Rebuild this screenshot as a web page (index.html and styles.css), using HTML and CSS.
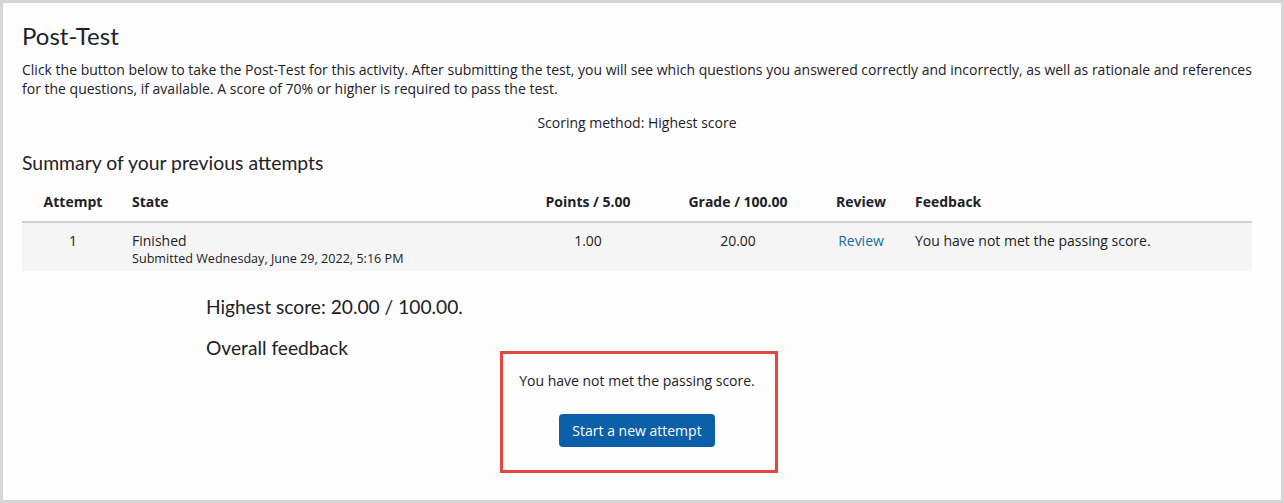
FILE: index.html
```html
<!DOCTYPE html>
<html lang="en">
<head>
  <meta charset="UTF-8">
  <title>Post-Test</title>
  <link rel="stylesheet" href="styles.css">
</head>
<body>
  <div class="frame">
    <h2 class="page-title">Post-Test</h2>
    <p class="intro">Click the button below to take the Post-Test for this activity. After submitting the test, you will see which questions you answered correctly and incorrectly, as well as rationale and references for the questions, if available. A score of 70% or higher is required to pass the test.</p>
    <p class="scoring">Scoring method: Highest score</p>

    <h3 class="section-title">Summary of your previous attempts</h3>
    <table class="attempts">
      <colgroup>
        <col class="c-attempt">
        <col class="c-state">
        <col class="c-points">
        <col class="c-grade">
        <col class="c-review">
        <col class="c-feedback">
      </colgroup>
      <thead>
        <tr>
          <th class="center">Attempt</th>
          <th>State</th>
          <th class="center">Points / 5.00</th>
          <th class="center">Grade / 100.00</th>
          <th class="center">Review</th>
          <th>Feedback</th>
        </tr>
      </thead>
      <tbody>
        <tr>
          <td class="center">1</td>
          <td>Finished<span class="submitted">Submitted Wednesday, June 29, 2022, 5:16 PM</span></td>
          <td class="center">1.00</td>
          <td class="center">20.00</td>
          <td class="center"><a href="#" class="review-link">Review</a></td>
          <td>You have not met the passing score.</td>
        </tr>
      </tbody>
    </table>

    <h3 class="result">Highest score: 20.00 / 100.00.</h3>
    <h3 class="result overall">Overall feedback</h3>

    <div class="feedback-wrap">
      <div class="feedback-box">
        <p class="feedback-text">You have not met the passing score.</p>
        <button class="btn-attempt">Start a new attempt</button>
        <span class="highlight"></span>
      </div>
    </div>
  </div>
</body>
</html>
```

FILE: styles.css
```css
* {
  box-sizing: border-box;
}

body {
  margin: 0;
  font-family: 'Open Sans', sans-serif;
  font-size: 14px;
  color: #1d2125;
  background: #fff;
}

.frame {
  height: 503px;
  border: 3px solid #d6d6d6;
  background: #fdfdfd;
  padding: 18px 29px 0 19px;
}

.page-title,
.section-title,
.result {
  font-family: Lato, 'Open Sans', sans-serif;
  font-weight: 400;
}

.page-title {
  margin: 0;
  font-size: 24px;
  line-height: 29px;
}

.intro {
  margin: 10px 0 0;
  line-height: 19px;
}

.scoring {
  margin: 15px 0 0;
  line-height: 20px;
  text-align: center;
}

.section-title {
  margin: 18px 0 0;
  font-size: 19.4px;
  line-height: 24px;
}

.attempts {
  width: 100%;
  margin-top: 8px;
  border-collapse: collapse;
  table-layout: fixed;
}

.c-attempt { width: 102px; }
.c-state { width: 390px; }
.c-points { width: 148px; }
.c-grade { width: 152px; }
.c-review { width: 94px; }
.c-feedback { width: 344px; }

.attempts th {
  padding: 9px 8px;
  line-height: 20px;
  font-weight: 700;
  text-align: left;
  border-bottom: 2px solid #d0d0d0;
}

.attempts td {
  padding: 8px 8px 4px;
  line-height: 20px;
  vertical-align: top;
  background: #f5f5f5;
}

.attempts th:last-child,
.attempts td:last-child {
  padding-left: 7px;
}

.attempts .center {
  text-align: center;
}

.submitted {
  display: block;
  font-size: 12.6px;
  line-height: 16px;
}

.review-link {
  color: #1769aa;
  text-decoration: none;
}

.result {
  margin: 24px 0 0 184px;
  font-size: 19.2px;
  line-height: 24px;
}

.result.overall {
  margin-top: 17px;
}

.feedback-wrap {
  display: flex;
  justify-content: center;
  margin-top: 11px;
}

.feedback-box {
  position: relative;
  display: flex;
  flex-direction: column;
  align-items: center;
}

.feedback-text {
  margin: 0;
  line-height: 20px;
}

.btn-attempt {
  margin-top: 23px;
  height: 33px;
  padding: 0 13px;
  border: none;
  border-radius: 4px;
  background: #0b5ea8;
  color: #fff;
  font-family: 'Open Sans', sans-serif;
  font-size: 14px;
}

.highlight {
  position: absolute;
  top: -20px;
  bottom: -26px;
  left: -19px;
  right: -23px;
  border: 3px solid #e5473d;
  pointer-events: none;
}
```
